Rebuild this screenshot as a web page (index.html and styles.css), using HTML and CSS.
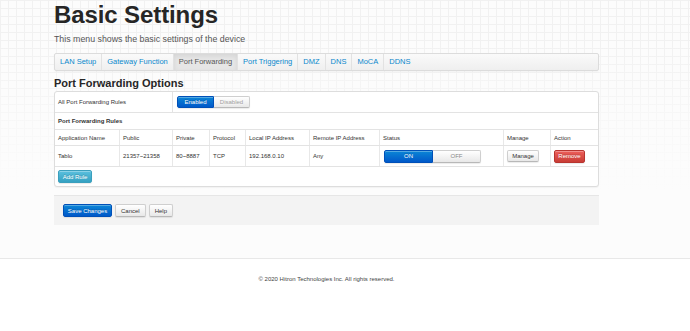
FILE: index.html
```html
<!DOCTYPE html>
<html lang="en">
<head>
<meta charset="utf-8">
<title>Basic Settings</title>
<link rel="stylesheet" href="styles.css">
</head>
<body>
<div class="page">
  <div class="container">
    <h1 class="title">Basic Settings</h1>
    <p class="subtitle">This menu shows the basic settings of the device</p>
    <ul class="tabs">
      <li><a class="tab">LAN Setup</a></li>
      <li><a class="tab">Gateway Function</a></li>
      <li><a class="tab active">Port Forwarding</a></li>
      <li><a class="tab">Port Triggering</a></li>
      <li><a class="tab">DMZ</a></li>
      <li><a class="tab">DNS</a></li>
      <li><a class="tab">MoCA</a></li>
      <li><a class="tab">DDNS</a></li>
    </ul>
    <h2 class="section">Port Forwarding Options</h2>
    <div class="panel">
      <div class="row-all">
        <div class="cell-label">All Port Forwarding Rules</div>
        <div class="cell-ctrl">
          <div class="btn-group">
            <span class="btn btn-primary seg">Enabled</span><span class="btn seg seg-off">Disabled</span>
          </div>
        </div>
      </div>
      <div class="row-title">Port Forwarding Rules</div>
      <div class="rules" role="table">
        <div class="rules-row head" role="row">
          <div class="c">Application Name</div>
          <div class="c">Public</div>
          <div class="c">Private</div>
          <div class="c">Protocol</div>
          <div class="c">Local IP Address</div>
          <div class="c">Remote IP Address</div>
          <div class="c">Status</div>
          <div class="c">Manage</div>
          <div class="c">Action</div>
        </div>
        <div class="rules-row body" role="row">
          <div class="c">Tablo</div>
          <div class="c">21357~21358</div>
          <div class="c">80~8887</div>
          <div class="c">TCP</div>
          <div class="c">192.168.0.10</div>
          <div class="c">Any</div>
          <div class="c">
            <div class="toggle"><span class="btn btn-primary tg">ON</span><span class="btn tg tg-off">OFF</span></div>
          </div>
          <div class="c"><span class="btn btn-sm">Manage</span></div>
          <div class="c"><span class="btn btn-danger btn-sm">Remove</span></div>
        </div>
      </div>
      <div class="panel-foot"><span class="btn btn-info btn-add">Add Rule</span></div>
    </div>
    <div class="actions">
      <span class="btn btn-primary act">Save Changes</span>
      <span class="btn act">Cancel</span>
      <span class="btn act">Help</span>
    </div>
  </div>
</div>
<footer class="footer">
  <div class="container">
    <p class="copy">© 2020 Hitron Technologies Inc. All rights reserved.</p>
  </div>
</footer>
</body>
</html>
```

FILE: styles.css
```css
html, body {
  margin: 0;
  padding: 0;
}
body {
  font-family: "Liberation Sans", Arial, Helvetica, sans-serif;
  color: #333;
  background: #ffffff;
  min-height: 331px;
}
.page {
  padding-top: 1px;
  padding-bottom: 33px;
  background:
    linear-gradient(to bottom, rgba(252,252,252,0) 40px, rgba(252,252,252,0.6) 120px, #fcfcfc 190px),
    repeating-linear-gradient(to right, #f1f1f1 0, #f1f1f1 1px, transparent 1px, transparent 8px),
    repeating-linear-gradient(to bottom, #f1f1f1 0, #f1f1f1 1px, transparent 1px, transparent 8px),
    #fcfcfc;
}
.container {
  width: 545px;
  margin-left: 54px;
}
.title {
  margin: 0;
  font-size: 24px;
  line-height: 28px;
  font-weight: bold;
  color: #262626;
  letter-spacing: -0.1px;
}
.subtitle {
  margin: 4px 0 0;
  font-size: 8.8px;
  line-height: 12px;
  color: #555;
}
.tabs {
  list-style: none;
  margin: 8px 0 0;
  padding: 0;
  display: flex;
  height: 18px;
  box-sizing: border-box;
  border: 1px solid #dcdcdc;
  border-radius: 2px;
  background: linear-gradient(to bottom, #fafafa, #efefef);
  box-shadow: 0 1px 2px rgba(0,0,0,0.04);
}
.tabs li {
  display: flex;
  border-right: 1px solid #e2e2e2;
}
.tabs li:last-child {
  border-right: none;
}
.tab {
  display: block;
  padding: 0 5px;
  font-size: 7.5px;
  line-height: 16px;
  color: #0a88cc;
}
.tab.active {
  color: #555;
  background: #e6e6e6;
  box-shadow: inset 0 2px 5px rgba(0,0,0,0.08);
}
.section {
  margin: 5px 0 0;
  font-size: 11px;
  line-height: 14px;
  font-weight: bold;
  color: #262626;
}
.panel {
  margin-top: 1px;
  background: #fff;
  border: 1px solid #dddddd;
  border-radius: 3px;
  box-shadow: 0 1px 1px rgba(0,0,0,0.04);
  font-size: 6px;
  color: #333;
}
.row-all {
  display: grid;
  grid-template-columns: 117px 1fr;
  height: 21px;
  box-sizing: border-box;
  border-bottom: 1px solid #e3e3e3;
}
.cell-label {
  padding-left: 3px;
  display: flex;
  align-items: center;
}
.cell-ctrl {
  border-left: 1px solid #e3e3e3;
  padding-left: 4px;
  display: flex;
  align-items: center;
}
.row-title {
  height: 17px;
  box-sizing: border-box;
  border-bottom: 1px solid #e3e3e3;
  padding-left: 3px;
  display: flex;
  align-items: center;
  font-weight: bold;
}
.rules-row {
  display: grid;
  grid-template-columns: 64px 53px 37px 36px 64px 70px 124px 47px 48px;
  box-sizing: border-box;
  border-bottom: 1px solid #e3e3e3;
}
.rules-row.head {
  height: 16px;
}
.rules-row.body {
  height: 21px;
}
.c {
  padding-left: 3px;
  display: flex;
  align-items: center;
  white-space: nowrap;
  overflow: hidden;
}
.c + .c {
  border-left: 1px solid #e8e8e8;
}
.rules-row.body .c:nth-child(7) {
  padding-left: 4px;
}
.panel-foot {
  padding: 3px 3px 3px;
  display: flex;
}
.btn {
  display: inline-flex;
  align-items: center;
  justify-content: center;
  box-sizing: border-box;
  font-size: 6px;
  line-height: 1;
  color: #333;
  border: 1px solid #cfcfcf;
  border-bottom-color: #b8b8b8;
  border-radius: 2px;
  background: linear-gradient(to bottom, #ffffff, #e8e8e8);
  box-shadow: inset 0 1px 0 rgba(255,255,255,0.3), 0 1px 1px rgba(0,0,0,0.08);
  text-shadow: 0 1px 0 rgba(255,255,255,0.6);
}
.btn-primary {
  color: #fff;
  border-color: #0050b8;
  background: linear-gradient(to bottom, #0a86d6, #0058c9);
  text-shadow: 0 -1px 0 rgba(0,0,0,0.2);
}
.btn-danger {
  color: #fff;
  border-color: #b83530;
  background: linear-gradient(to bottom, #ee5f5b, #c83c35);
  text-shadow: 0 -1px 0 rgba(0,0,0,0.2);
}
.btn-info {
  color: #fff;
  border-color: #3a9fbd;
  background: linear-gradient(to bottom, #5bc0de, #35a1c2);
  text-shadow: 0 -1px 0 rgba(0,0,0,0.2);
}
.btn-group,
.toggle {
  display: flex;
}
.seg {
  height: 12px;
  width: 37px;
}
.btn-group .seg:first-child,
.toggle .tg:first-child {
  border-top-right-radius: 0;
  border-bottom-right-radius: 0;
}
.btn-group .seg:last-child,
.toggle .tg:last-child {
  border-top-left-radius: 0;
  border-bottom-left-radius: 0;
  border-left: none;
}
.seg-off {
  width: 36px;
  color: #a0a0a0;
}
.tg {
  width: 49px;
  height: 13px;
}
.tg-off {
  color: #888;
  width: 48px;
}
.btn-sm {
  width: 32px;
  height: 12px;
}
.btn-danger.btn-sm {
  width: 31px;
  height: 13px;
}
.btn-add {
  width: 34px;
  height: 13px;
}
.actions {
  margin-top: 8px;
  height: 30px;
  box-sizing: border-box;
  border-top: 1px solid #e6e6e6;
  background: #f3f3f3;
  padding: 8px 9px 0;
  display: flex;
  gap: 3px;
  align-items: flex-start;
}
.act {
  height: 13px;
  padding: 0 5px;
}
.act.btn-primary {
  width: 49px;
  padding: 0;
}
.footer {
  border-top: 1px solid #e8e8e8;
  background: #fff;
  padding-top: 15px;
}
.copy {
  margin: 0;
  text-align: center;
  font-size: 6px;
  line-height: 10px;
  color: #444;
}
```
